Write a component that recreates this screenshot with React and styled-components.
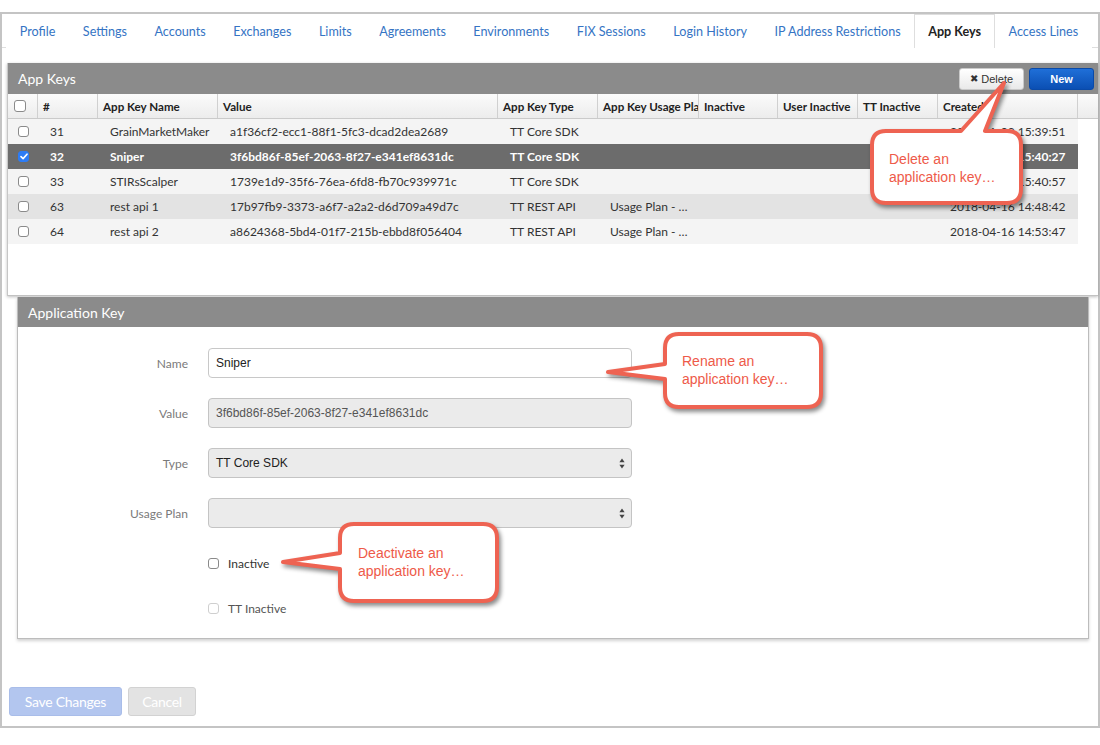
import React from 'react';
import styled, { createGlobalStyle } from 'styled-components';

const GlobalStyle = createGlobalStyle`
  html, body { margin: 0; padding: 0; background: #fff; }
  body { font-family: Lato, "Liberation Sans", sans-serif; }
  * { box-sizing: border-box; }
`;

const Page = styled.div`
  position: relative;
  width: 1100px;
  height: 745px;
  padding-top: 12px;
`;

const Frame = styled.div`
  width: 1100px;
  height: 716px;
  border: 2px solid #c4c4c4;
  display: flex;
  flex-direction: column;
`;

const TabBar = styled.nav`
  height: 34px;
  display: flex;
  align-items: flex-end;
  border-bottom: 1px solid #dedede;
  padding-left: 4px;
`;

const Tab = styled.div`
  height: 34px;
  margin-bottom: -1px;
  padding: 1px 12.75px 2px;
  display: flex;
  align-items: center;
  font-size: 12.6px;
  white-space: nowrap;
  color: ${p => (p.$active ? '#222' : '#3574c4')};
  font-weight: ${p => (p.$active ? 700 : 400)};
  border: 1px solid ${p => (p.$active ? '#dedede' : 'transparent')};
  border-bottom: none;
  background: #fff;
`;

const Body = styled.div`
  flex: 1;
  display: flex;
  flex-direction: column;
  padding: 15px 0 0 5px;
`;

const KeysPanel = styled.section`
  display: flex;
  flex-direction: column;
  border-left: 1px solid #c6c6c6;
  box-shadow: 0 1px 3px rgba(0, 0, 0, 0.25);
`;

const PanelHeader = styled.header`
  height: ${p => p.$h}px;
  background: #8b8b8b;
  display: flex;
  align-items: center;
  justify-content: space-between;
  padding: 0 4px 0 10px;
  color: #fff;
  font-size: 14px;
`;

const HeaderButtons = styled.div`
  display: flex;
  gap: 5px;
`;

const SmallButton = styled.button`
  width: 65px;
  height: 22px;
  border-radius: 3px;
  font-family: "Liberation Sans", Arial, sans-serif;
  font-size: 11px;
  display: flex;
  align-items: center;
  justify-content: center;
  gap: 3px;
  cursor: pointer;
  padding: 0;
  ${p =>
    p.$primary
      ? `background: linear-gradient(#1f6fd8, #0b4fb3); border: 1px solid #0a4aa8; color: #fff; font-weight: 700;`
      : `background: linear-gradient(#ffffff, #e9e9e9); border: 1px solid #c9c9c9; color: #333;`}
`;

const XGlyph = styled.span`
  font-family: "DejaVu Sans", sans-serif;
  font-size: 10px;
  font-weight: 700;
  color: #333;
`;

const COLS = '30px 60px 120px 280px 100px 101px 79px 80px 80px 140px';

const TableHead = styled.div`
  display: grid;
  grid-template-columns: ${COLS} 1fr;
  height: 25px;
  background: linear-gradient(#fbfbfb, #ececec);
  border-bottom: 1px solid #cacaca;
`;

const HeadCell = styled.div`
  display: flex;
  align-items: center;
  padding-left: ${p => (p.$box ? 6 : 5)}px;
  border-right: ${p => (p.$last ? 'none' : '1px solid #d0d0d0')};
  font-size: 11.6px;
  font-weight: 700;
  color: #222;
  white-space: nowrap;
  overflow: hidden;
`;

const TableBody = styled.div`
  height: 177px;
  background: #fff;
  border-bottom: 1px solid #c2c2c2;
`;

const Row = styled.div`
  display: grid;
  grid-template-columns: ${COLS};
  width: 1070px;
  height: 25px;
  background: ${p => p.$bg};
  color: ${p => (p.$selected ? '#fff' : '#333')};
  font-weight: ${p => (p.$selected ? 700 : 400)};
`;

const Cell = styled.div`
  display: flex;
  align-items: center;
  padding-left: ${p => (p.$box ? 10 : 12)}px;
  font-size: 12px;
  white-space: nowrap;
  overflow: hidden;
`;

const Box = styled.span`
  width: ${p => p.$size || 11}px;
  height: ${p => p.$size || 11}px;
  border-radius: 3px;
  border: 1px solid ${p => (p.$checked ? '#2d7cf5' : p.$faded ? '#cfcfcf' : '#8a8a8a')};
  background: ${p => (p.$checked ? '#2d7cf5' : '#fff')};
  display: inline-flex;
  align-items: center;
  justify-content: center;
  flex: none;
`;

const DetailPanel = styled.section`
  margin: 1px 9px 0 10px;
  border: 1px solid #bcbcbc;
  border-top: none;
  box-shadow: 0 2px 3px rgba(0, 0, 0, 0.18);
`;

const Form = styled.div`
  display: grid;
  grid-template-columns: 170px 424px;
  column-gap: 20px;
  row-gap: 20px;
  padding: 21px 0 20px 0;
`;

const Label = styled.div`
  height: ${p => (p.$check ? 20 : 30)}px;
  margin-top: ${p => (p.$check ? 5 : 0)}px;
  display: flex;
  align-items: center;
  justify-content: flex-end;
  font-size: 12px;
  color: #7a7a7a;
`;

const Field = styled.div`
  height: 30px;
  border: 1px solid ${p => (p.$plain ? '#c8c8c8' : '#c4c4c4')};
  border-radius: 4px;
  background: ${p => (p.$plain ? '#fff' : '#ebebeb')};
  display: flex;
  align-items: center;
  justify-content: space-between;
  padding: 0 6px 0 7px;
  font-family: "Liberation Sans", Arial, sans-serif;
  font-size: 12px;
  color: ${p => (p.$muted ? '#555' : '#222')};
`;

const CheckRow = styled.label`
  height: 20px;
  margin-top: 5px;
  display: flex;
  align-items: center;
  gap: 9px;
  font-size: 12px;
  color: ${p => (p.$faded ? '#555' : '#333')};
`;

const Footer = styled.div`
  margin-top: auto;
  display: flex;
  gap: 6px;
  padding: 0 0 10px 7px;
`;

const FooterButton = styled.button`
  height: 29px;
  width: ${p => p.$w}px;
  border-radius: 3px;
  border: 1px solid ${p => (p.$primary ? '#a9bde9' : '#d2d2d2')};
  background: ${p => (p.$primary ? '#b3c6ef' : '#e3e3e3')};
  color: #fff;
  font-family: Lato, sans-serif;
  font-size: 14px;
  letter-spacing: -0.3px;
  padding: 0;
`;

const CalloutWrap = styled.div`
  position: absolute;
  left: ${p => p.$x}px;
  top: ${p => p.$y}px;
  width: ${p => p.$w}px;
  height: ${p => p.$h}px;
`;

const CalloutSvg = styled.svg`
  position: absolute;
  inset: 0;
  overflow: visible;
  filter: drop-shadow(2px 3px 2px rgba(0, 0, 0, 0.45));
`;

const CalloutText = styled.div`
  position: absolute;
  left: ${p => p.$tx}px;
  top: ${p => p.$ty}px;
  font-family: "Liberation Sans", Arial, sans-serif;
  font-size: 14px;
  line-height: 18px;
  color: #ee5a49;
  white-space: nowrap;
`;

function Callout({ x, y, w, h, d, tx, ty, lines }) {
  return (
    <CalloutWrap $x={x} $y={y} $w={w} $h={h}>
      <CalloutSvg width={w} height={h} viewBox={`${x} ${y} ${w} ${h}`}>
        <path d={d} fill="#fff" stroke="#ee6352" strokeWidth="4" strokeLinejoin="round" />
      </CalloutSvg>
      <CalloutText $tx={tx - x} $ty={ty - y}>
        {lines.map(l => (
          <div key={l}>{l}</div>
        ))}
      </CalloutText>
    </CalloutWrap>
  );
}

const Check = () => (
  <svg width="8" height="7" viewBox="0 0 8 7">
    <path d="M1 3.6 L3.1 5.6 L7 1.2" stroke="#fff" strokeWidth="1.6" fill="none" strokeLinecap="round" strokeLinejoin="round" />
  </svg>
);

const SelectArrows = () => (
  <svg width="6" height="11" viewBox="0 0 6 11">
    <path d="M3 0.5 L5.6 4.3 L0.4 4.3 Z" fill="#444" />
    <path d="M3 10.5 L5.6 6.7 L0.4 6.7 Z" fill="#444" />
  </svg>
);

const tabs = [
  'Profile', 'Settings', 'Accounts', 'Exchanges', 'Limits', 'Agreements', 'Environments',
  'FIX Sessions', 'Login History', 'IP Address Restrictions', 'App Keys', 'Access Lines',
];

const heads = ['#', 'App Key Name', 'Value', 'App Key Type', 'App Key Usage Plan', 'Inactive', 'User Inactive', 'TT Inactive', 'Created'];

const rows = [
  { id: '31', name: 'GrainMarketMaker', value: 'a1f36cf2-ecc1-88f1-5fc3-dcad2dea2689', type: 'TT Core SDK', plan: '', created: '2018-01-09 15:39:51', bg: '#f4f4f4' },
  { id: '32', name: 'Sniper', value: '3f6bd86f-85ef-2063-8f27-e341ef8631dc', type: 'TT Core SDK', plan: '', created: '2018-01-09 15:40:27', bg: '#6c6c6c', selected: true },
  { id: '33', name: 'STIRsScalper', value: '1739e1d9-35f6-76ea-6fd8-fb70c939971c', type: 'TT Core SDK', plan: '', created: '2018-01-09 15:40:57', bg: '#f4f4f4' },
  { id: '63', name: 'rest api 1', value: '17b97fb9-3373-a6f7-a2a2-d6d709a49d7c', type: 'TT REST API', plan: 'Usage Plan - …', created: '2018-04-16 14:48:42', bg: '#e3e3e3' },
  { id: '64', name: 'rest api 2', value: 'a8624368-5bd4-01f7-215b-ebbd8f056404', type: 'TT REST API', plan: 'Usage Plan - …', created: '2018-04-16 14:53:47', bg: '#f4f4f4' },
];

export default function App() {
  return (
    <>
      <GlobalStyle />
      <Page>
        <Frame>
          <TabBar>
            {tabs.map(t => (
              <Tab key={t} $active={t === 'App Keys'}>{t}</Tab>
            ))}
          </TabBar>
          <Body>
            <KeysPanel>
              <PanelHeader $h={31}>
                <span>App Keys</span>
                <HeaderButtons>
                  <SmallButton><XGlyph>✖</XGlyph>Delete</SmallButton>
                  <SmallButton $primary>New</SmallButton>
                </HeaderButtons>
              </PanelHeader>
              <TableHead>
                <HeadCell $box><Box $size={12} /></HeadCell>
                {heads.map(h => (
                  <HeadCell key={h}>{h}</HeadCell>
                ))}
                <HeadCell $last />
              </TableHead>
              <TableBody>
                {rows.map(r => (
                  <Row key={r.id} $bg={r.bg} $selected={r.selected}>
                    <Cell $box>
                      <Box $checked={r.selected}>{r.selected && <Check />}</Box>
                    </Cell>
                    <Cell>{r.id}</Cell>
                    <Cell>{r.name}</Cell>
                    <Cell>{r.value}</Cell>
                    <Cell>{r.type}</Cell>
                    <Cell>{r.plan}</Cell>
                    <Cell />
                    <Cell />
                    <Cell />
                    <Cell>{r.created}</Cell>
                  </Row>
                ))}
              </TableBody>
            </KeysPanel>

            <DetailPanel>
              <PanelHeader $h={30}>
                <span>Application Key</span>
              </PanelHeader>
              <Form>
                <Label>Name</Label>
                <Field $plain>Sniper</Field>
                <Label>Value</Label>
                <Field $muted>3f6bd86f-85ef-2063-8f27-e341ef8631dc</Field>
                <Label>Type</Label>
                <Field>TT Core SDK<SelectArrows /></Field>
                <Label>Usage Plan</Label>
                <Field><span /><SelectArrows /></Field>
                <Label $check />
                <CheckRow><Box />Inactive</CheckRow>
                <Label $check />
                <CheckRow $faded><Box $faded />TT Inactive</CheckRow>
              </Form>
            </DetailPanel>
          </Body>
          <Footer>
            <FooterButton $primary $w={113}>Save Changes</FooterButton>
            <FooterButton $w={68}>Cancel</FooterButton>
          </Footer>
        </Frame>

        <Callout
          x={860} y={75} w={175} h={140}
          d="M886 131 L961 131 L1004 83 L985 131 L1007 131 Q1021 131 1021 145 L1021 189 Q1021 203 1007 203 L886 203 Q872 203 872 189 L872 145 Q872 131 886 131 Z"
          tx={889} ty={150}
          lines={['Delete an', 'application key…']}
        />
        <Callout
          x={600} y={325} w={230} h={90}
          d="M679 334 L807 334 Q821 334 821 348 L821 393 Q821 407 807 407 L679 407 Q665 407 665 393 L665 379 L608 372 L665 364 L665 348 Q665 334 679 334 Z"
          tx={682} ty={352}
          lines={['Rename an', 'application key…']}
        />
        <Callout
          x={275} y={515} w={230} h={95}
          d="M354 524 L483 524 Q497 524 497 538 L497 587 Q497 601 483 601 L354 601 Q340 601 340 587 L340 569 L283 562 L340 553 L340 538 Q340 524 354 524 Z"
          tx={358} ty={544}
          lines={['Deactivate an', 'application key…']}
        />
      </Page>
    </>
  );
}
